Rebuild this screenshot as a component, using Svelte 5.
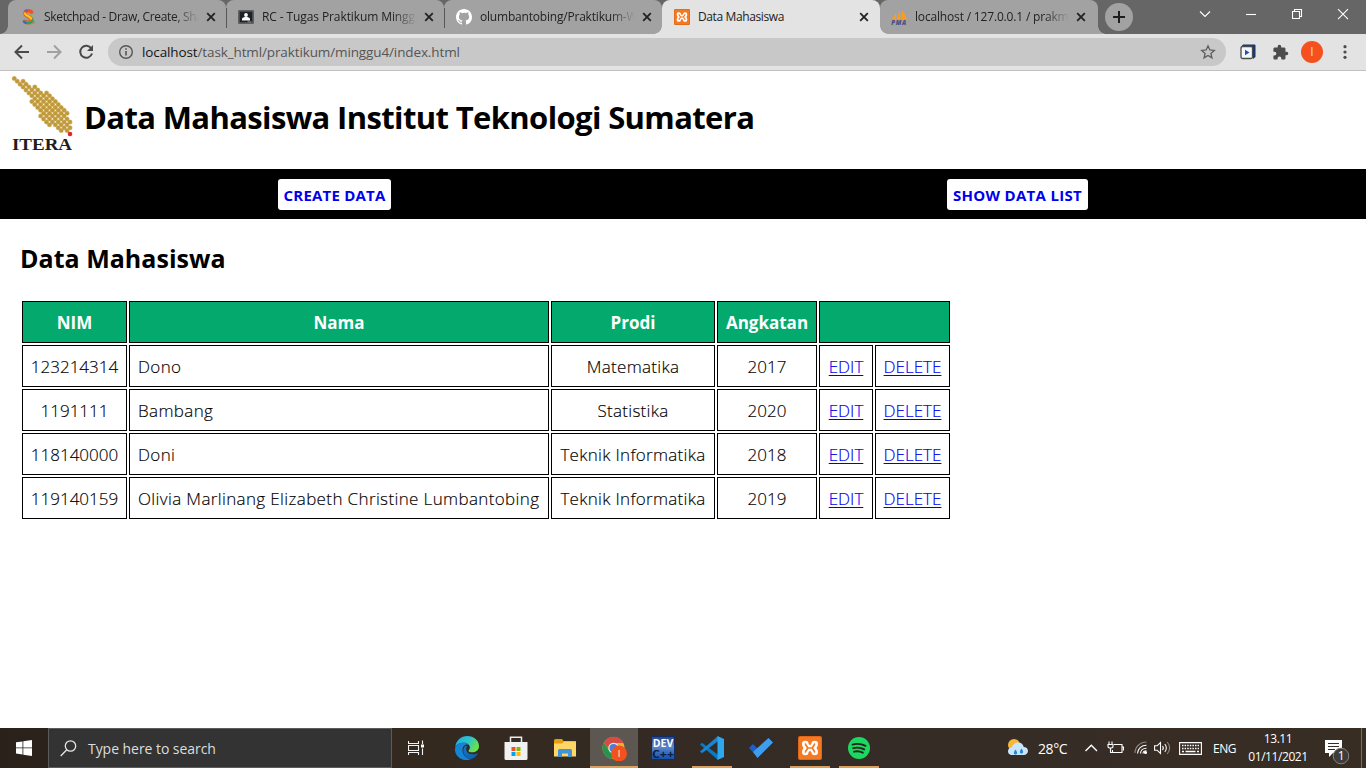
<script>
  const tabs = [
    { title: 'Sketchpad - Draw, Create, Share', icon: 'sketch', spacing: -0.32 },
    { title: 'RC - Tugas Praktikum Minggu 4', icon: 'classroom', spacing: -0.1 },
    { title: 'olumbantobing/Praktikum-Web', icon: 'github', spacing: -0.2 },
    { title: 'Data Mahasiswa', icon: 'xampp', active: true, spacing: -0.38 },
    { title: 'localhost / 127.0.0.1 / prakmgg4', icon: 'pma', spacing: -0.17 }
  ];

  const students = [
    { nim: '123214314', nama: 'Dono', prodi: 'Matematika', angkatan: 2017 },
    { nim: '1191111', nama: 'Bambang', prodi: 'Statistika', angkatan: 2020 },
    { nim: '118140000', nama: 'Doni', prodi: 'Teknik Informatika', angkatan: 2018 },
    { nim: '119140159', nama: 'Olivia Marlinang Elizabeth Christine Lumbantobing', prodi: 'Teknik Informatika', angkatan: 2019 }
  ];

  const apps = [
    { icon: 'edge' }, { icon: 'store' }, { icon: 'files' },
    { icon: 'chrome', current: true }, { icon: 'dev' },
    { icon: 'vscode', open: true }, { icon: 'todo' },
    { icon: 'xampp', open: true }, { icon: 'spotify', open: true }
  ];

  // first and last lattice row of every column of the emblem
  const columns = [[0,0],[1,1],[2,2],[1,3],[2,4],[3,5],[4,8],[3,9],[4,10],[5,13],[6,14],[5,15],[6,16],[7,15],[8,16],[9,17],[10,18],[11,17],[12,18],[15,17]];
  const dots = columns.flatMap(([top, bottom], k) => {
    const out = [];
    for (let m = top; m <= bottom; m += 2) out.push({ x: 14.3 + k * 2.93, y: 7.4 + m * 2.9 });
    return out;
  });
</script>

{#snippet xampp(size)}
  <svg width={size} height={size} viewBox="0 0 24 24">
    <rect width="24" height="24" rx="2" fill="#e0661a" />
    <rect x="1" y="1" width="22" height="22" rx="1.5" fill="#f37a23" />
    <g fill="none" stroke-linecap="round" stroke-linejoin="round">
      <path d="M7.300 8c0 2 1.700 2.500 1.700 4s-1.700 2-1.700 4M16.700 8c0 2-1.700 2.500-1.700 4s1.700 2 1.700 4M9 12h6" stroke="#fff" stroke-width="6.600" />
      <path d="M7.500 8.200c.3 2 2 2 2 3.800s-1.700 1.800-2 3.800M16.500 8.200c-.3 2-2 2-2 3.800s1.700 1.800 2 3.800M9.500 12h5" stroke="#f37a23" stroke-width="1.700" />
    </g>
  </svg>
{/snippet}

{#snippet favicon(name)}
  {#if name === 'sketch'}
    <svg width="16" height="16" viewBox="0 0 16 16" fill="none" stroke-linecap="round">
      <ellipse cx="9" cy="13" rx="6" ry="2.600" fill="#7c9480" />
      <path d="M11.500 3.200C9 1 5 1.500 5 4.500c0 3 6.600 3 6.600 6.200 0 3-4.500 3.600-6.800 1.900" stroke="#e86520" stroke-width="3.800" />
      <path d="M12 2.800C10 .800 5.200 1.700 5.200 4.500" stroke="#f04c27" stroke-width="1.800" />
      <path d="M4.900 4.500c1 3 6 2.700 6.500 5.500" stroke="#ffc61b" stroke-width="2.200" />
      <path d="M12.500 10.500c-.4 3-4 4-6 3.500" stroke="#18a863" stroke-width="1.800" />
      <path d="M3.800 12.300l2 1.500" stroke="#2b6ed2" stroke-width="2.200" />
      <path d="M5 1.900l2-.8" stroke="#7858b6" stroke-width="1.500" />
    </svg>
  {:else if name === 'classroom'}
    <svg width="16" height="16" viewBox="0 0 16 16">
      <rect y="1" width="16" height="14" rx="1" fill="#5b6065" />
      <rect x="1.700" y="2.700" width="12.600" height="10.600" fill="#202124" />
      <circle cx="8" cy="6" r="1.900" fill="#fff" />
      <path d="M4 11.500V10c0-1.400 2.400-2 4-2s4 .6 4 2v1.500z" fill="#fff" />
      <path d="M9.500 12.500h4v.8h-4z" fill="#aaa" />
    </svg>
  {:else if name === 'github'}
    <svg width="16" height="16" viewBox="0 0 16 16">
      <path fill="#fff" d="M8 0C3.580 0 0 3.580 0 8c0 3.540 2.290 6.530 5.470 7.590.4.070.550-.170.550-.380v-1.490c-2.010.370-2.530-.490-2.690-.940-.090-.230-.480-.940-.820-1.130-.280-.150-.680-.520-.010-.530.630-.010 1.080.580 1.230.820.720 1.210 1.870.870 2.330.660.070-.520.280-.870.510-1.070-1.780-.200-3.640-.890-3.640-3.950 0-.870.310-1.590.820-2.150-.080-.200-.360-1.020.080-2.120 0 0 .670-.210 2.200.820A7.650 7.650 0 0 1 8 3.870c.680 0 1.360.090 2 .270 1.530-1.040 2.200-.820 2.200-.820.440 1.100.160 1.920.080 2.120.510.560.820 1.270.820 2.150 0 3.070-1.870 3.750-3.650 3.950.290.250.540.730.540 1.480v2.190c0 .210.150.460.550.380A8 8 0 0 0 16 8c0-4.420-3.580-8-8-8z" />
    </svg>
  {:else if name === 'xampp'}
    {@render xampp(16)}
  {:else}
    <svg class="pma" width="17" height="16" viewBox="0 0 17 16">
      <path d="M.8 10.500L5 3.500V10.500zM5.500 10.500L8.700 1 9.700 10.500zM10.200 10.500L10.800 1c2.800 3 4.300 6 4.800 9.500z" fill="#f89c23" />
      <text x=".3" y="15.700" font-size="6.200" font-weight="800" font-style="italic" textLength="15" fill="#4c4f82">PMA</text>
    </svg>
  {/if}
{/snippet}

{#snippet appIcon(name)}
  {#if name === 'edge'}
    <svg width="24" height="24" viewBox="0 0 24 24">
      <defs>
        <linearGradient id="edge-top" x2="1" y2=".5"><stop stop-color="#22a7e5" /><stop offset=".55" stop-color="#2ac4cf" /><stop offset="1" stop-color="#6de04a" /></linearGradient>
        <linearGradient id="edge-low" x2="1" y2="1"><stop stop-color="#1477c9" /><stop offset="1" stop-color="#0d5aa7" /></linearGradient>
      </defs>
      <path d="M.2 11C1 4.500 6 0 12.300 0 19 0 24 4.500 24 10c0 4-3 6.300-6.700 6.300-3 0-4.200-1-3.700-1.900 1-1.200 1.300-1.900 1.300-2.900C14.800 8.500 12 6.800 8.500 6.800 4.300 6.800 1.500 8.600.2 11z" fill="url(#edge-top)" />
      <path d="M.1 12.500C.5 9 4 6.800 8.500 6.800c2 0 4.200.6 5.300 2-4-1-6.300 1.800-6.300 5.200 0 5 4 8.500 8 9.500C7 26-.5 20-.1 12.500z" fill="#1684d4" />
      <path d="M10 10c-4 5-.5 12.500 6 13.200 3-.9 5-2.600 6.600-5.200.3-.7-.3-.9-.8-.6-4.500 2-9.800.4-10.600-3.400-.3-1.500.3-3 1-4z" fill="url(#edge-low)" />
    </svg>
  {:else if name === 'store'}
    <svg width="24" height="24" viewBox="0 0 24 24">
      <path d="M6.500 6.500V1.200h11v5.300" fill="none" stroke="#ececec" stroke-width="1.500" />
      <path d="M.5 6h23v16.500a1.500 1.500 0 0 1-1.500 1.500H2A1.500 1.500 0 0 1 .5 22.500z" fill="#f1f1f1" />
      <path d="M7.500 11h4v4h-4z" fill="#f25022" /><path d="M12.500 11h4v4h-4z" fill="#7fba00" />
      <path d="M7.500 16h4v4h-4z" fill="#00a4ef" /><path d="M12.500 16h4v4h-4z" fill="#ffb900" />
    </svg>
  {:else if name === 'files'}
    <svg width="24" height="24" viewBox="0 0 24 24">
      <path d="M1 4.500A1.500 1.500 0 0 1 2.500 3H9l1.500 2H22a1 1 0 0 1 1 1v14H1z" fill="#dfa012" />
      <path d="M1 7.500h8l2-2h12v15H1z" fill="#ffd766" />
      <path d="M5 21v-6.500A1.500 1.500 0 0 1 6.500 13h11a1.500 1.500 0 0 1 1.500 1.500V21h-4v-3.500H9V21z" fill="#3f95d8" />
    </svg>
  {:else if name === 'chrome'}
    <svg width="25" height="25" viewBox="0 0 25 25">
      <circle cx="11.500" cy="12" r="11" fill="#e3b62f" />
      <path d="M2 6.500A11 11 0 0 1 21.500 7H11.500a5 5 0 0 0-4.500 7z" fill="#d64b43" />
      <path d="M2 6.500l5 8c1.500 2.500 4 3 6.500 2L10 23C2 22-2 13 2 6.500z" fill="#299252" />
      <circle cx="11.500" cy="12" r="5.200" fill="#e8e8e8" /><circle cx="11.500" cy="12" r="4" fill="#4281df" />
      <circle cx="17" cy="17.500" r="8" fill="#f4511e" /><path d="M16.400 14h1.300v7h-1.300z" fill="#f6c9ba" />
    </svg>
  {:else if name === 'dev'}
    <svg class="dev" width="24" height="24" viewBox="0 0 24 24">
      <defs><linearGradient id="dev-bg" x2="0" y2="1"><stop stop-color="#20448d" /><stop offset=".45" stop-color="#5d86cc" /><stop offset="1" stop-color="#104fab" /></linearGradient></defs>
      <rect x=".5" y=".5" width="23" height="23" fill="url(#dev-bg)" stroke="#162b62" />
      <text x="1.800" y="10.800" font-size="10" font-weight="700" textLength="20.500" lengthAdjust="spacingAndGlyphs" fill="#fff">DEV</text>
      <text x="1" y="21.800" font-size="11" font-weight="700" textLength="22" lengthAdjust="spacingAndGlyphs" fill="#0c2045">C++</text>
    </svg>
  {:else if name === 'vscode'}
    <svg width="24" height="24" viewBox="0 0 24 24">
      <path d="M0 8.500l2-1.800 16 12V24L.3 8.800z" fill="#0879c4" />
      <path d="M0 15.500l2 1.800 16-12V0L.3 15.200z" fill="#1686d2" />
      <path d="M17.500 0L24 3v18l-6.500 3z" fill="#2da7ef" />
    </svg>
  {:else if name === 'todo'}
    <svg width="24" height="24" viewBox="0 0 24 24">
      <path d="M0 12l4-4 6 6-2 6.500z" fill="#1c5fca" /><path d="M4 16L19.500 2 24 6.500 8.500 22z" fill="#3f9df0" />
    </svg>
  {:else if name === 'xampp'}
    {@render xampp(24)}
  {:else}
    <svg width="24" height="24" viewBox="0 0 24 24">
      <circle cx="12" cy="12" r="11" fill="#1ed760" />
      <path d="M5.500 8.600c4.500-1.300 9-.8 13 1.200M6.200 12.200c4-1 7.600-.6 11 1.200M7 15.700c3.200-.8 6-.5 8.800 1" fill="none" stroke="#20261f" stroke-width="1.900" stroke-linecap="round" />
    </svg>
  {/if}
{/snippet}

<div class="screen">
  <header class="strip">
    <div class="tabs">
      {#each tabs as tab, i}
        <div class="tab" class:active={tab.active} class:ruled={i === 0 || i === 1}>
          <span class="fav">{@render favicon(tab.icon)}</span>
          <span class="title" class:fade={!tab.active} style:letter-spacing="{tab.spacing}px">{tab.title}</span>
          <svg class="close" width="10" height="10" viewBox="0 0 10 10"><path d="M1.200 1.200l7.600 7.600M8.800 1.200L1.200 8.800" stroke="#222" stroke-width="1.800" /></svg>
        </div>
      {/each}
    </div>
    <div class="plus"><svg width="14" height="14" viewBox="0 0 14 14"><path d="M7 1v12M1 7h12" stroke="#1e1e1e" stroke-width="2" /></svg></div>
    <div class="controls">
      <svg width="46" height="28" viewBox="0 0 46 28"><path d="M18 11.500l5 5 5-5" /></svg>
      <svg width="46" height="28" viewBox="0 0 46 28"><path d="M18 14.500h10" /></svg>
      <svg width="46" height="28" viewBox="0 0 46 28"><path d="M18.500 11.500h7v7h-7zM20.500 11.500v-2h7v7h-2" /></svg>
      <svg width="46" height="28" viewBox="0 0 46 28"><path d="M18 9.200l10 10M28 9.200l-10 10" /></svg>
    </div>
  </header>

  <div class="toolbar">
    <svg class="nav-icon" width="20" height="20" viewBox="0 0 20 20"><path d="M17 10H4M10 3.500L3.500 10l6.500 6.500" stroke="#4a4a4a" /></svg>
    <svg class="nav-icon" width="20" height="20" viewBox="0 0 20 20"><path d="M3 10h13M10 3.500l6.500 6.500-6.500 6.500" stroke="#a0a0a0" /></svg>
    <svg class="nav-icon" width="20" height="20" viewBox="0 0 20 20"><path d="M15.300 6.500A6 6 0 1 0 16 11.500" stroke="#4a4a4a" /><path d="M17 3v6h-6z" fill="#4a4a4a" /></svg>
    <div class="address">
      <svg width="16" height="16" viewBox="0 0 16 16" fill="none" stroke="#555" stroke-width="1.400"><circle cx="8" cy="8" r="6.300" /><path d="M8 7v4.500M8 4.300v1.500" stroke-width="1.600" /></svg>
      <span class="url"><b>localhost</b>/task_html/praktikum/minggu4/index.html</span>
      <svg class="star" width="16" height="16" viewBox="0 0 16 16"><path d="M8 1.800l1.800 4.200 4.500.4-3.400 3 1 4.500L8 11.500l-3.900 2.400 1-4.500-3.400-3 4.500-.4z" fill="none" stroke="#5d5d5d" stroke-width="1.300" /></svg>
    </div>
    <div class="tools">
      <svg width="16" height="16" viewBox="0 0 16 16"><path d="M3 .5h11.500a1 1 0 0 1 1 1V13l-2.500 2V3H1z" fill="#1d3765" /><rect x="1" y="2.500" width="11.500" height="12" rx="1.500" fill="#f6f6f6" stroke="#474d54" stroke-width="1.300" /><path d="M5 5.700L9.500 8.500 5 11.300z" fill="#1553bb" /></svg>
      <svg width="17" height="17" viewBox="0 0 24 24"><path fill="#4c4c4c" d="M20.500 11H19V7c0-1.100-.9-2-2-2h-4V3.500a2.500 2.500 0 0 0-5 0V5H4c-1.100 0-2 .9-2 2v3.800h1.500a2.700 2.700 0 0 1 0 5.400H2V20c0 1.100.9 2 2 2h3.800v-1.500a2.700 2.700 0 0 1 5.400 0V22H17c1.100 0 2-.9 2-2v-4h1.500a2.500 2.500 0 0 0 0-5z" /></svg>
      <span class="avatar">I</span>
      <svg width="4" height="16" viewBox="0 0 4 16" fill="#4c4c4c"><circle cx="2" cy="2.700" r="1.600" /><circle cx="2" cy="8" r="1.600" /><circle cx="2" cy="13.300" r="1.600" /></svg>
    </div>
  </div>

  <main>
    <div class="brand">
      <svg class="logo" width="84" height="85" viewBox="0 0 84 85">
        <g fill="#dcc68b">{#each dots as dot}<circle cx={dot.x} cy={dot.y} r="2.500" />{/each}</g>
        <g fill="#c0993a">{#each dots as dot}<circle cx={dot.x} cy={dot.y} r="2" />{/each}</g>
        <circle cx="70" cy="63" r="2.300" fill="#e4252a" />
        <text x="12" y="78.900" font-size="17.500" font-weight="700" textLength="60" lengthAdjust="spacingAndGlyphs" fill="#211d1c">ITERA</text>
      </svg>
      <h1>Data Mahasiswa Institut Teknologi Sumatera</h1>
    </div>
    <nav>
      <div><a class="create" href="#create">CREATE DATA</a></div>
      <div><a class="show" href="#show">SHOW DATA LIST</a></div>
    </nav>
    <section>
      <h2>Data Mahasiswa</h2>
      <table>
        <colgroup><col class="c1" /><col class="c2" /><col class="c3" /><col class="c4" /><col class="c5" /><col class="c6" /></colgroup>
        <thead><tr><th>NIM</th><th>Nama</th><th>Prodi</th><th>Angkatan</th><th colspan="2"></th></tr></thead>
        <tbody>
          {#each students as s}
            <tr>
              <td>{s.nim}</td><td class="name">{s.nama}</td><td class="prodi">{s.prodi}</td><td>{s.angkatan}</td>
              <td><a href="#edit">EDIT</a></td><td><a href="#delete">DELETE</a></td>
            </tr>
          {/each}
        </tbody>
      </table>
    </section>
  </main>

  <footer>
    <div class="start"><svg width="16" height="16" viewBox="0 0 16 16" fill="#fff"><path d="M0 2.300L6.500 1.400v6.100H0zM7.300 1.300L16 0v7.500H7.300zM0 8.300h6.500v6.200L0 13.600zM7.300 8.300H16V16l-8.700-1.300z" /></svg></div>
    <div class="search">
      <svg width="17" height="17" viewBox="0 0 17 17" fill="none" stroke="#e6e6e6" stroke-width="1.300"><circle cx="10.500" cy="6" r="5.200" /><path d="M6.800 9.800L.7 16" /></svg>
      <span>Type here to search</span>
    </div>
    <div class="app"><svg width="17" height="16" viewBox="0 0 17 16" fill="none" stroke="#f2f2f2"><path d="M.5 1v2.500h10V1M.5 15v-2.500h10V15M.5 5.500h10v5H.5zM14.500 .5v3.500M14.500 8.500V15" stroke-width="1.100" /><path d="M13 4.500h3v3h-3z" fill="#fff" stroke="none" /></svg></div>
    <div class="apps">
      {#each apps as app}
        <div class="app" class:current={app.current} class:open={app.open}>{@render appIcon(app.icon)}</div>
      {/each}
    </div>
    <div class="tray">
      <svg width="22" height="20" viewBox="0 0 22 20"><circle cx="7" cy="7" r="6" fill="#f9b737" /><path d="M5.500 17C2 17 1 15 1 13.200c0-2.200 1.600-3.700 3.700-3.700C5.500 6.500 8 4.500 11 4.500c3.200 0 5.300 2 5.700 4.600 2.400 0 4.300 1.600 4.300 4s-1.800 3.900-4.300 3.900z" fill="#c9e5fb" /><path d="M8.500 11.500c-3 4-1 5 0 5s3-1 0-5zM14.500 10.500c-3 4-1 5 0 5s3-1 0-5z" fill="#2685d7" /></svg>
      <span class="temp">28°C</span>
      <svg class="line" width="14" height="10" viewBox="0 0 14 10"><path d="M.5 8L6.300 2.300 12 8" stroke-width="1.400" /></svg>
      <svg class="line" width="17" height="14" viewBox="0 0 17 14"><path d="M5.500 11.500V9M7 3.500h8v8H5.500M15.500 6h1v3.500M2 .5v3M5 .5v3M1 3.500h5v2c0 2-5 2-5 0zM3.500 7v4.500h2" stroke-width="1.100" /></svg>
      <svg class="line" width="14" height="14" viewBox="0 0 14 14"><path d="M1 12C1 6 6 1 12.500 1" stroke="#8d8984" /><path d="M3.500 12.500c0-4.800 4-8.300 9-8.300M6.500 12.500c0-3 2.500-5.300 6-5.300M9 12.500c0-1.500 1.500-2.800 3.500-2.800" /><circle cx="11.500" cy="11.500" r="1" fill="#fff" /></svg>
      <svg class="line" width="17" height="14" viewBox="0 0 17 14"><path d="M.6 4.800h2.500L6.500 1.500v11L3.100 9.200H.6zM8.500 5c1 1.200 1 2.800 0 4M10.800 3c2 2.200 2 5.800 0 8" /><path d="M13.200 1c3.200 3.500 3.200 8.500 0 12" stroke="#8d8984" /></svg>
      <svg class="line" width="23" height="13" viewBox="0 0 23 13"><path d="M.6.6h21.800v11.800H.6z" /><path d="M3 3.500h17M3 6.500h17" stroke-width="1.500" stroke-dasharray="1.500 1.100" /><path d="M3 9.500h2M6.500 9.500h10M18 9.500h2" stroke-width="1.300" /></svg>
      <span class="lang">ENG</span>
      <div class="clock"><span class="time">13.11</span><span>01/11/2021</span></div>
      <svg class="notes" width="25" height="25" viewBox="0 0 25 25"><path d="M0 0h17v13H8l-4 4v-4H0z" fill="#fff" /><path d="M3 3.500h11M3 6.500h11M3 9.500h7" stroke="#372d24" /><circle cx="16" cy="16" r="7.800" fill="#3e3d3b" stroke="#85827e" /><text x="12.700" y="20.300" font-size="12" fill="#fff">1</text></svg>
      <i class="peek"></i>
    </div>
  </footer>
</div>

<style>
  :global(body) { margin: 0; overflow: hidden; background: #fff; }
  .screen { display: flex; flex-direction: column; width: 1366px; height: 768px; font-family: 'Open Sans', 'Noto Sans', sans-serif; color: #000; }
  svg { display: block; flex: none; }

  .strip { display: flex; height: 34px; background: #666; padding-left: 8px; box-sizing: border-box; flex: none; }
  .tabs { display: flex; width: 1090px; }
  .tab { position: relative; box-sizing: border-box; display: flex; align-items: center; width: 218px; height: 34px; padding: 0 10px 0 12px; background: #a2a2a2; border-radius: 8px 8px 0 0; }
  .tab:nth-child(1)::before, .tab:nth-child(5)::after, .active::before, .active::after { content: ''; position: absolute; bottom: 0; width: 8px; height: 8px; }
  .tab:nth-child(1)::before { left: -8px; background: radial-gradient(circle at 0 0, transparent 7.5px, #a2a2a2 8px); }
  .tab:nth-child(5)::after { right: -8px; background: radial-gradient(circle at 100% 0, transparent 7.5px, #a2a2a2 8px); }
  .active::before { left: -8px; background: radial-gradient(circle at 0 0, transparent 7.5px, #e3e3e3 8px); }
  .active::after { right: -8px; background: radial-gradient(circle at 100% 0, transparent 7.5px, #e3e3e3 8px); }
  .tab.active { background: #e3e3e3; z-index: 1; padding-right: 11px; }
  .tab:nth-child(5) { padding: 0 12px 0 11px; }
  .ruled::after { content: ''; position: absolute; z-index: 1; right: -1px; top: 8px; width: 1px; height: 20px; background: #575757; }
  .fav { width: 16px; margin-right: 8px; flex: none; }
  .pma { font-family: 'Open Sans', sans-serif; }
  .title { flex: 1; overflow: hidden; white-space: nowrap; font-size: 12px; line-height: 18px; color: #222; margin-right: 7px; }
  .title.fade { -webkit-mask-image: linear-gradient(90deg, #000 84%, transparent); mask-image: linear-gradient(90deg, #000 84%, transparent); }
  .plus { width: 28px; height: 28px; margin: 3px 0 0 7px; border-radius: 50%; background: #a2a2a2; display: flex; align-items: center; justify-content: center; }
  .controls { display: flex; margin-left: auto; }
  .controls path { fill: none; stroke: #fff; stroke-width: 1.1; }

  .toolbar { display: flex; align-items: center; box-sizing: border-box; height: 37px; flex: none; padding: 0 0 0 12px; background: #e3e3e3; border-bottom: 1px solid #c1c1c1; }
  .nav-icon { margin-right: 12px; fill: none; stroke-width: 2; }
  .address { box-sizing: border-box; display: flex; align-items: center; width: 1118px; height: 28px; border-radius: 14px; background: #c8c8c8; padding: 0 10px; }
  .url { flex: 1; margin-left: 8px; font-size: 13.5px; line-height: 20px; letter-spacing: -0.12px; color: #555; }
  .url b { font-weight: 400; color: #151515; }
  .tools { display: flex; align-items: center; margin-left: 14px; }
  .tools > :nth-child(2) { margin-left: 16px; }
  .avatar { width: 22px; height: 22px; margin: 0 20px 0 12px; border-radius: 50%; background: #f4511e; color: #fbd8cb; font-size: 12px; line-height: 22px; text-align: center; }

  main { display: flex; flex-direction: column; flex: 1; min-height: 0; }
  .brand { display: flex; height: 98px; }
  .logo { font-family: 'Liberation Serif', serif; }
  h1 { margin: 0; font-size: 31px; line-height: 44px; padding-top: 24px; letter-spacing: -0.63px; font-weight: 700; }
  nav { display: flex; height: 50px; background: #000; }
  nav div { flex: 1; display: flex; justify-content: center; align-items: flex-start; padding-top: 10px; }
  nav a { box-sizing: border-box; height: 31px; line-height: 33px; margin-right: 14px; border-radius: 3px; background: #fff; color: #0000ee; font-weight: 700; font-size: 15px; letter-spacing: 0.2px; text-decoration: none; text-align: center; white-space: nowrap; }
  .create { width: 113px; }
  .show { width: 141px; letter-spacing: 0.3px; }
  section { padding: 21px 20px 0; }
  h2 { margin: 0 0 23px; font-size: 25px; line-height: 36px; letter-spacing: 0.02px; }
  table { table-layout: fixed; width: 932px; border-spacing: 2px; font-size: 17px; }
  .c1 { width: 105px; } .c2 { width: 420px; } .c3 { width: 164px; } .c4 { width: 100px; } .c5 { width: 54px; } .c6 { width: 75px; }
  th, td { box-sizing: border-box; height: 42px; padding: 2px 0 0; border: 1px solid #000; text-align: center; line-height: 24px; white-space: nowrap; }
  th { background: #04aa6d; color: #fff; font-weight: 700; letter-spacing: 0; }
  td { font-weight: 300; -webkit-text-stroke: 0.15px currentColor; }
  td.name { text-align: left; padding-left: 8px; letter-spacing: 0.37px; }
  td.prodi { letter-spacing: 0.3px; }
  td a { color: #0000ee; text-underline-offset: 2px; text-decoration-thickness: 1px; }

  footer { display: flex; height: 40px; flex: none; background: linear-gradient(90deg, #2a211b, #33291f 30%, #352c27 65%, #372d23); color: #fff; }
  .start { width: 48px; display: flex; align-items: center; justify-content: center; }
  .search { box-sizing: border-box; width: 344px; border: 1px solid #5c5c5c; background: #333; display: flex; align-items: center; padding-left: 11px; font-size: 14px; color: #ddd; letter-spacing: -0.05px; }
  .search span { margin-left: 11px; }
  .apps { display: flex; gap: 1px; margin-left: 3px; }
  .app { position: relative; width: 48px; height: 40px; display: flex; align-items: center; justify-content: center; }
  .current { background: #5d5752; }
  .current::after, .open::after { content: ''; position: absolute; bottom: 0; left: 4px; right: 4px; height: 2px; background: #dc9e5d; }
  .current::after { left: 0; right: 0; }
  .dev { font-family: 'Open Sans', sans-serif; }
  .tray { margin-left: auto; display: grid; grid-template-columns: 30px 48px 22px 27px 20px 25px 34px 30px 82px 36px 5px; width: 359px; align-items: center; font-size: 12px; }
  .line { fill: none; stroke: #fff; stroke-width: 1.1; }
  .temp { font-size: 14px; letter-spacing: -0.4px; padding-left: 1px; }
  .lang { letter-spacing: -0.5px; }
  .clock { display: flex; flex-direction: column; align-items: center; line-height: 18px; letter-spacing: -0.42px; margin-left: -5px; width: 80px; }
  .notes { align-self: start; margin-top: 12px; }
  .peek { width: 1px; height: 40px; background: #77706a; }
</style>
